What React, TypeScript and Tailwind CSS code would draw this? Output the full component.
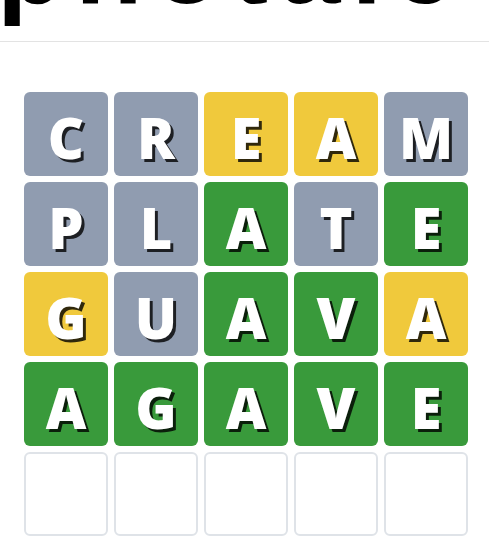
import React from "react";

type Tile = { letter: string; state: "absent" | "present" | "correct" | "empty" };

const rows: Tile[][] = [
  [
    { letter: "C", state: "absent" },
    { letter: "R", state: "absent" },
    { letter: "E", state: "present" },
    { letter: "A", state: "present" },
    { letter: "M", state: "absent" },
  ],
  [
    { letter: "P", state: "absent" },
    { letter: "L", state: "absent" },
    { letter: "A", state: "correct" },
    { letter: "T", state: "absent" },
    { letter: "E", state: "correct" },
  ],
  [
    { letter: "G", state: "present" },
    { letter: "U", state: "absent" },
    { letter: "A", state: "correct" },
    { letter: "V", state: "correct" },
    { letter: "A", state: "present" },
  ],
  [
    { letter: "A", state: "correct" },
    { letter: "G", state: "correct" },
    { letter: "A", state: "correct" },
    { letter: "V", state: "correct" },
    { letter: "E", state: "correct" },
  ],
  [
    { letter: "", state: "empty" },
    { letter: "", state: "empty" },
    { letter: "", state: "empty" },
    { letter: "", state: "empty" },
    { letter: "", state: "empty" },
  ],
];

const tileClass = {
  absent: "bg-[#909cb0]",
  present: "bg-[#f0c93c]",
  correct: "bg-[#399a3b]",
  empty: "bg-white border-2 border-[#dfe3e8]",
};

const App: React.FC = () => {
  return (
    <div className="min-h-screen bg-white font-['Liberation_Sans',sans-serif]">
      {/* Header */}
      <header className="h-[42px] border-b border-[#e3e3e3] overflow-hidden">
        <h1 className="mt-[-90px] ml-[-3px] text-[110px] leading-none font-bold tracking-[11px] text-black whitespace-nowrap">
          photale
        </h1>
      </header>

      {/* Board */}
      <div className="mt-[50px] pl-[24px]">
        <div className="grid grid-cols-[repeat(5,84px)] auto-rows-[84px] gap-[6px]">
          {rows.map((row, r) =>
            row.map((tile, c) => (
              <div
                key={`${r}-${c}`}
                className={`rounded-md flex items-center justify-center ${tileClass[tile.state]}`}
              >
                <span className="pt-[6px] font-['Open_Sans',sans-serif] text-[56px] font-extrabold leading-none text-white [text-shadow:3px_3px_0_rgba(0,0,0,0.8)]">
                  {tile.letter}
                </span>
              </div>
            ))
          )}
        </div>
      </div>
    </div>
  );
};

export default App;
